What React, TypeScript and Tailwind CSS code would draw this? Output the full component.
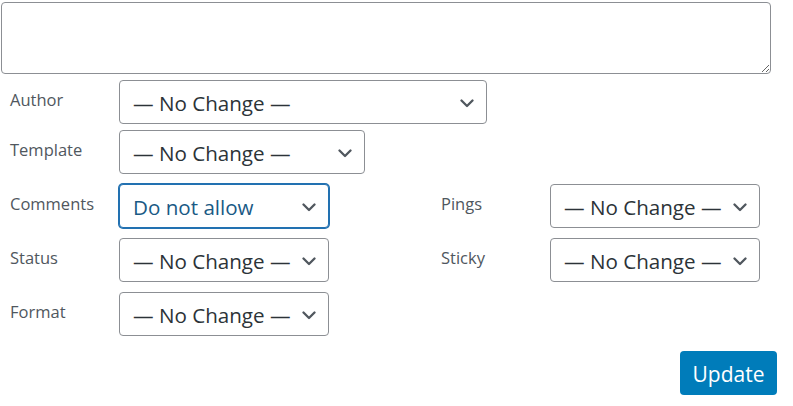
import React from "react";

const font = { fontFamily: '"Open Sans", "Noto Sans", sans-serif' };

function Chevron() {
  return (
    <svg width="14" height="9" viewBox="0 0 14 9" className="shrink-0 mt-[3px]">
      <path d="M1.5 1.5 L7 7 L12.5 1.5" fill="none" stroke="#50575e" strokeWidth="2.3" strokeLinecap="round" strokeLinejoin="round" />
    </svg>
  );
}

function Select({ value, w, focused }: { value: string; w: string; focused?: boolean }) {
  return (
    <div
      className={
        "h-[44px] flex items-center justify-between pl-[13px] pr-[12px] rounded-[4px] bg-white border " +
        w +
        (focused
          ? " border-[#2271b1] shadow-[0_0_0_1px_#2271b1] text-[#1a5a85]"
          : " border-[#8c8f94] text-[#2c3338]")
      }
    >
      <span className="text-[20.6px] leading-none whitespace-nowrap mt-[3px]">{value}</span>
      <Chevron />
    </div>
  );
}

function Row({ label, children, className }: { label: string; children: React.ReactNode; className?: string }) {
  return (
    <div className={"flex items-center " + (className ?? "")}>
      <div className="w-[119px] pl-[10px] text-[16.5px] text-[#50575e] leading-none -mt-[4px]">{label}</div>
      {children}
    </div>
  );
}

export default function App() {
  return (
    <div className="w-[793px] h-[406px] bg-white relative" style={font}>
      <div className="pt-[2px] pl-[1px]">
        <textarea className="block w-[770px] h-[72px] border border-[#8c8f94] rounded-[4px] bg-white" />
      </div>
      <Row label="Author" className="mt-[6px]">
        <Select value="— No Change —" w="w-[368px]" />
      </Row>
      <Row label="Template" className="mt-[6px]">
        <Select value="— No Change —" w="w-[246px]" />
      </Row>
      <div className="flex mt-[10px]">
        <div className="w-[431px] flex flex-col gap-[10px]">
          <Row label="Comments">
            <Select value="Do not allow" w="w-[210px]" focused />
          </Row>
          <Row label="Status">
            <Select value="— No Change —" w="w-[210px]" />
          </Row>
          <Row label="Format">
            <Select value="— No Change —" w="w-[210px]" />
          </Row>
        </div>
        <div className="flex flex-col gap-[10px]">
          <Row label="Pings">
            <Select value="— No Change —" w="w-[210px]" />
          </Row>
          <Row label="Sticky">
            <Select value="— No Change —" w="w-[210px]" />
          </Row>
        </div>
      </div>
      <div className="flex justify-end pr-[16px] mt-[15px]">
        <button className="w-[97px] h-[44px] rounded-[4px] bg-[#007cba] text-white text-[21px] leading-none pt-[2px]">
          Update
        </button>
      </div>
    </div>
  );
}
